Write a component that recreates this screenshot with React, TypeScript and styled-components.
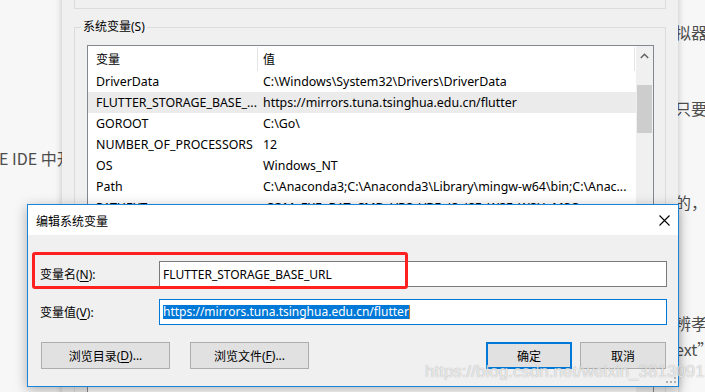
import React from "react";
import styled, { createGlobalStyle } from "styled-components";

const UI = `"Noto Sans", "Noto Sans CJK SC", sans-serif`;
const CJK = `"Noto Sans CJK SC", sans-serif`;

const Global = createGlobalStyle`
  html, body { margin: 0; padding: 0; }
  body { width: 705px; height: 392px; overflow: hidden; background: #f7f7f7; }
  #root { width: 705px; height: 392px; }
`;

const Scene = styled.div`
  position: relative;
  width: 705px;
  height: 392px;
  overflow: hidden;
  background: #f7f7f7;
  font-family: ${UI};
`;

/* ---------- blog page underneath ---------- */
const Blog = styled.div`
  position: absolute;
  inset: 0;
  display: flex;
  justify-content: space-between;
  font-family: ${CJK};
  font-size: 16px;
  line-height: 26px;
  color: #4d4d4d;
`;

const BlogColumn = styled.div<{ $width: number; $top: number; $shift: number }>`
  width: ${(p) => p.$width}px;
  padding-top: ${(p) => p.$top}px;
  margin-left: ${(p) => p.$shift}px;
  display: flex;
  flex-direction: column;
  white-space: nowrap;
  overflow: hidden;
`;

const BlogLine = styled.div<{ $gap: number }>`
  margin-top: ${(p) => p.$gap}px;
  height: 26px;
`;

/* ---------- background window (环境变量) ---------- */
const BackWindow = styled.div`
  position: absolute;
  left: 62px;
  top: -10px;
  width: 616px;
  height: 420px;
  box-sizing: border-box;
  padding: 0 12px;
  background: #f0f0f0;
  box-shadow: 0 0 7px rgba(0, 0, 0, 0.22);
  display: flex;
  flex-direction: column;
`;

const TopPanel = styled.div`
  height: 19px;
  box-sizing: border-box;
  border: 1px solid #dcdcdc;
  border-top: none;
`;

const GroupBox = styled.div`
  position: relative;
  margin-top: 18px;
  flex: 1;
  border: 1px solid #dcdcdc;
  padding: 17px 11px 0 12px;
  display: flex;
  flex-direction: column;
`;

const GroupLabel = styled.span`
  position: absolute;
  left: 6px;
  top: -8px;
  padding: 0 2px;
  background: #f0f0f0;
  font-size: 12px;
  line-height: 14px;
  color: #000;
`;

const ListView = styled.div`
  flex: 1;
  border: 1px solid #828790;
  background: #fff;
  display: flex;
`;

const Table = styled.div`
  width: 548px;
  display: flex;
  flex-direction: column;
`;

const HeaderRow = styled.div`
  display: grid;
  grid-template-columns: 170px 377px;
  height: 25px;
  align-items: stretch;
`;

const HeaderCell = styled.div<{ $pad: number }>`
  padding-left: ${(p) => p.$pad}px;
  border-right: 1px solid #e5e5e5;
  display: flex;
  align-items: center;
  font-size: 12px;
  color: #000;
  margin-top: 1px;
`;

const Row = styled.div<{ $selected?: boolean }>`
  display: grid;
  grid-template-columns: 170px 378px;
  height: 21px;
  align-items: center;
  background: ${(p) => (p.$selected ? "#ebebeb" : "transparent")};
  font-size: 12.4px;
  color: #000;
`;

const Cell = styled.div<{ $pad: number }>`
  padding-left: ${(p) => p.$pad}px;
  white-space: nowrap;
  overflow: hidden;
`;

const ScrollBar = styled.div`
  width: 17px;
  background: #f0f0f0;
  display: flex;
  flex-direction: column;
`;

const ArrowButton = styled.div`
  height: 17px;
  display: flex;
  align-items: center;
  justify-content: center;
  padding-top: 2px;
  box-sizing: border-box;
`;

const Thumb = styled.div`
  margin: 22px 1px 0 1px;
  height: 48px;
  background: #cdcdcd;
`;

/* ---------- edit dialog ---------- */
const Dialog = styled.div`
  position: absolute;
  left: 27px;
  top: 204px;
  width: 652px;
  height: 183px;
  box-sizing: border-box;
  border: 1px solid #1883d7;
  background: #f0f0f0;
  box-shadow: 0 3px 12px rgba(0, 0, 0, 0.3);
  display: flex;
  flex-direction: column;
`;

const TitleBar = styled.div`
  height: 30px;
  flex: none;
  background: #fff;
  display: flex;
  align-items: center;
  justify-content: space-between;
  padding: 0 8px;
`;

const Title = styled.span`
  font-size: 12px;
  color: #000;
  margin-top: 2px;
`;

const Body = styled.div`
  flex: 1;
  padding: 26px 11px 17px 12px;
  display: flex;
  flex-direction: column;
`;

const FormRow = styled.div<{ $gap: number }>`
  display: grid;
  grid-template-columns: 119px 1fr;
  align-items: center;
  margin-top: ${(p) => p.$gap}px;
`;

const Label = styled.span`
  font-size: 12px;
  color: #000;
`;

const Key = styled.span`
  text-decoration: underline;
  text-underline-offset: 2px;
`;

const TextBox = styled.div<{ $focused?: boolean }>`
  height: 26px;
  box-sizing: border-box;
  border: 1px solid ${(p) => (p.$focused ? "#0078d7" : "#7a7a7a")};
  background: #fff;
  padding-left: 3px;
  display: flex;
  align-items: center;
  font-size: 12px;
  color: #000;
  white-space: nowrap;
`;

const Selected = styled.span`
  background: #0078d7;
  color: #fff;
  line-height: 14px;
  border-right: 1px solid #c87a2a;
`;

const ButtonRow = styled.div`
  display: flex;
  margin-top: 17px;
  padding-left: 1px;
  padding-right: 1px;
`;

const Button = styled.div<{ $width: number; $default?: boolean; $gap?: number }>`
  width: ${(p) => p.$width}px;
  height: 27px;
  box-sizing: border-box;
  margin-left: ${(p) => p.$gap ?? 0}px;
  background: #e1e1e1;
  border: ${(p) => (p.$default ? "2px solid #0078d7" : "1px solid #adadad")};
  display: flex;
  align-items: center;
  justify-content: center;
  font-size: 12px;
  color: #000;
`;

const Spacer = styled.div`
  flex: 1;
`;

const Grip = styled.svg`
  position: absolute;
  right: 1px;
  bottom: 2px;
`;

/* ---------- overlays ---------- */
const Annotation = styled.div`
  position: absolute;
  left: 32px;
  top: 252px;
  width: 376px;
  height: 37px;
  box-sizing: border-box;
  border: 3px solid #ff2020;
  border-radius: 3px;
`;

const Watermark = styled.div`
  position: absolute;
  left: 425px;
  top: 362px;
  font-family: "Liberation Sans", Arial, sans-serif;
  font-size: 17px;
  color: rgba(255, 255, 255, 0.72);
  text-shadow: 0 0 1px rgba(0, 0, 0, 0.35);
  white-space: nowrap;
`;

const rows = [
  { name: "DriverData", value: "C:\\Windows\\System32\\Drivers\\DriverData" },
  { name: "FLUTTER_STORAGE_BASE_...", value: "https://mirrors.tuna.tsinghua.edu.cn/flutter", selected: true },
  { name: "GOROOT", value: "C:\\Go\\" },
  { name: "NUMBER_OF_PROCESSORS", value: "12" },
  { name: "OS", value: "Windows_NT" },
  { name: "Path", value: "C:\\Anaconda3;C:\\Anaconda3\\Library\\mingw-w64\\bin;C:\\Anac..." },
  { name: "PATHEXT", value: ".COM;.EXE;.BAT;.CMD;.VBS;.VBE;.JS;.JSE;.WSF;.WSH;.MSC" },
  { name: "PROCESSOR_ARCHITECTURE", value: "AMD64" },
  { name: "PROCESSOR_IDENTIFIER", value: "Intel64 Family 6 Model 158 Stepping 10, GenuineIntel" },
  { name: "PROCESSOR_LEVEL", value: "6" },
];

const rightLines = [
  { text: "拟器", gap: 19 },
  { text: "只要", gap: 50 },
  { text: "的，", gap: 68 },
  { text: "辨孝", gap: 95 },
  { text: "ext”", gap: 0 },
];

export default function App() {
  return (
    <Scene>
      <Global />
      <Blog>
        <BlogColumn $width={80} $top={145} $shift={-1}>
          <BlogLine $gap={0}>E IDE 中开发</BlogLine>
        </BlogColumn>
        <BlogColumn $width={30} $top={0} $shift={0}>
          {rightLines.map((l, i) => (
            <BlogLine key={i} $gap={l.gap}>
              {l.text}
            </BlogLine>
          ))}
        </BlogColumn>
      </Blog>

      <BackWindow>
        <TopPanel />
        <GroupBox>
          <GroupLabel>系统变量(S)</GroupLabel>
          <ListView>
            <Table>
              <HeaderRow>
                <HeaderCell $pad={8}>变量</HeaderCell>
                <HeaderCell $pad={5}>值</HeaderCell>
              </HeaderRow>
              {rows.map((r) => (
                <Row key={r.name} $selected={r.selected}>
                  <Cell $pad={8}>{r.name}</Cell>
                  <Cell $pad={5}>{r.value}</Cell>
                </Row>
              ))}
            </Table>
            <ScrollBar>
              <ArrowButton>
                <svg width="9" height="6" viewBox="0 0 9 6">
                  <polyline points="0.8,5 4.5,1.3 8.2,5" fill="none" stroke="#606060" strokeWidth="1.4" />
                </svg>
              </ArrowButton>
              <Thumb />
            </ScrollBar>
          </ListView>
        </GroupBox>
      </BackWindow>

      <Dialog>
        <TitleBar>
          <Title>编辑系统变量</Title>
          <svg width="11" height="11" viewBox="0 0 11 11">
            <path d="M0.5 0.5 L10.5 10.5 M10.5 0.5 L0.5 10.5" stroke="#000" strokeWidth="1.1" />
          </svg>
        </TitleBar>
        <Body>
          <FormRow $gap={0}>
            <Label>
              变量名(<Key>N</Key>):
            </Label>
            <TextBox>FLUTTER_STORAGE_BASE_URL</TextBox>
          </FormRow>
          <FormRow $gap={12}>
            <Label>
              变量值(<Key>V</Key>):
            </Label>
            <TextBox $focused>
              <Selected>https://mirrors.tuna.tsinghua.edu.cn/flutter</Selected>
            </TextBox>
          </FormRow>
          <ButtonRow>
            <Button $width={129}>
              浏览目录(<Key>D</Key>)...
            </Button>
            <Button $width={119} $gap={20}>
              浏览文件(<Key>F</Key>)...
            </Button>
            <Spacer />
            <Button $width={86} $default>
              确定
            </Button>
            <Button $width={86} $gap={8}>
              取消
            </Button>
          </ButtonRow>
        </Body>
        <Grip width="11" height="7" viewBox="0 0 11 7">
          <g fill="#b0b0b0">
            <rect x="8" y="0" width="2" height="2" />
            <rect x="4" y="4" width="2" height="2" />
            <rect x="8" y="4" width="2" height="2" />
            <rect x="0" y="4" width="2" height="2" />
          </g>
        </Grip>
      </Dialog>

      <Annotation />
      <Watermark>https://blog.csdn.net/weixin_38130913</Watermark>
    </Scene>
  );
}
